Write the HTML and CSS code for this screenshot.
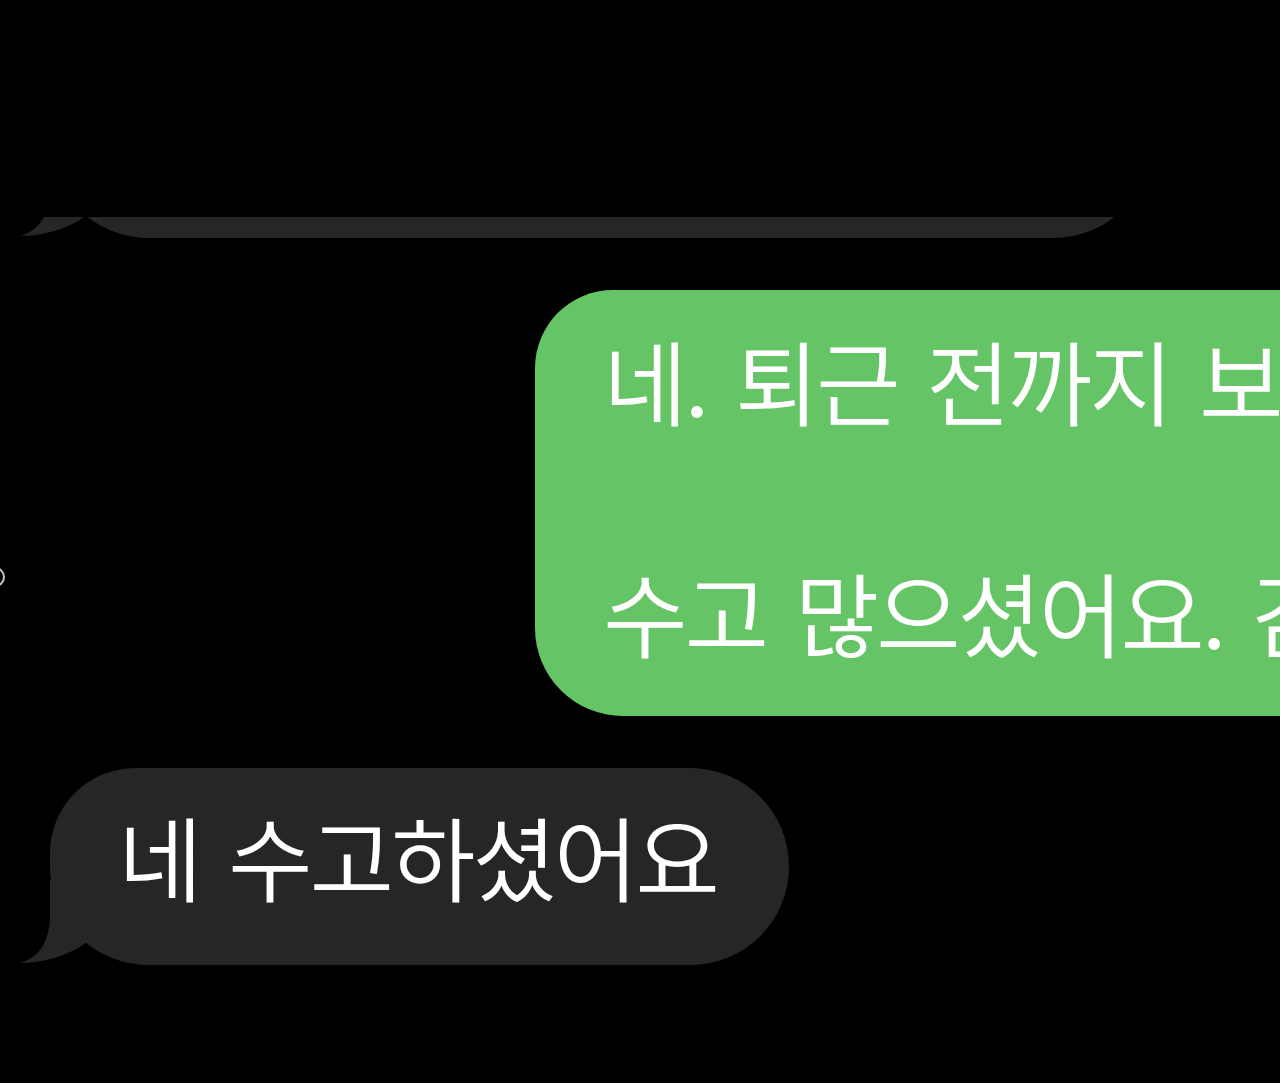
FILE: index.html
```html
<!DOCTYPE html>
<html lang="ko">
<head>
<meta charset="utf-8">
<title>메시지</title>
<link rel="stylesheet" href="styles.css">
</head>
<body>
<div class="chat">
  <span class="edge-ring"></span>

  <div class="clip">
    <div class="bubble in wide">
      <svg class="tail" viewBox="0 0 70 85" width="70" height="85" aria-hidden="true">
        <path d="M30 0 L30 35 C30 57 22 77 0 83 C25 83 50 75 67 62 L67 0 Z"/>
      </svg>
    </div>
  </div>

  <div class="row out-row">
    <div class="bubble out">네. 퇴근 전까지 보내드릴게요.

수고 많으셨어요. 감사합니다.</div>
  </div>

  <div class="row in-row">
    <div class="bubble in">네 수고하셨어요<svg class="tail" viewBox="0 0 70 85" width="70" height="85" aria-hidden="true">
        <path d="M30 0 L30 35 C30 57 22 77 0 83 C25 83 50 75 67 62 L67 0 Z"/>
      </svg></div>
  </div>
</div>
</body>
</html>
```
FILE: styles.css
```css
html, body {
  margin: 0;
  padding: 0;
  background: #000;
}
body {
  width: 1280px;
  height: 1083px;
  overflow: hidden;
  font-family: "Noto Sans CJK KR", "Noto Sans", sans-serif;
  color: #fff;
}
.chat {
  position: relative;
  padding-top: 217px;
  display: flex;
  flex-direction: column;
}
.edge-ring {
  position: absolute;
  left: -15px;
  top: 567px;
  width: 16px;
  height: 16px;
  border: 2px solid #c4c4c4;
  border-radius: 50%;
}
.clip {
  height: 21px;
  overflow: hidden;
  display: flex;
  align-items: flex-end;
  padding-left: 50px;
}
.bubble {
  position: relative;
  box-sizing: border-box;
  font-size: 92px;
  line-height: 116px;
  letter-spacing: -3.2px;
  word-spacing: 6px;
  font-weight: 350;
  white-space: pre;
}
.bubble.in {
  background: #262629;
  height: 197px;
  border-radius: 85px 98.5px 98.5px 98.5px;
  padding: 29px 72px 52px 68px;
}
.bubble.wide {
  flex: none;
  width: 1102px;
}
.tail {
  position: absolute;
  left: -30px;
  top: 112px;
  display: block;
}
.tail path {
  fill: #262629;
}
.row {
  display: flex;
}
.out-row {
  margin-top: 52px;
  padding-left: 535px;
}
.bubble.out {
  flex: none;
  background: #65c466;
  height: 426px;
  border-radius: 78px 0 0 88px;
  padding: 31px 0 0 68px;
}
.in-row {
  margin-top: 52px;
  padding-left: 50px;
}
```
